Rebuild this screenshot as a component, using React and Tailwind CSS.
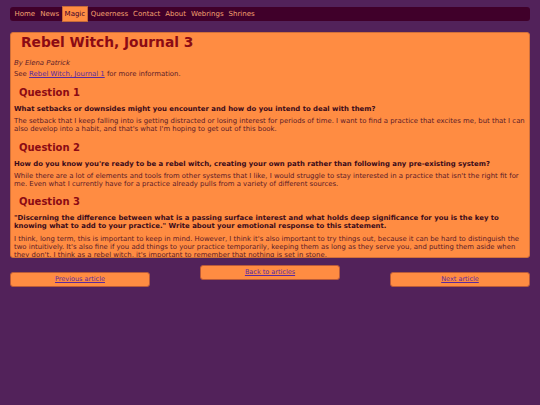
export default function App() {
  const nav = ["Home", "News", "Magic", "Queerness", "Contact", "About", "Webrings", "Shrines"];
  return (
    <div className="min-h-screen bg-[#52225a] px-[10px] pt-[7px] pb-4 font-['DejaVu_Sans',sans-serif]">
      <nav className="flex h-[14px] items-center rounded-[3px] bg-[#40002a] px-[2px] text-[7px]">
        {nav.map((n) =>
          n === "Magic" ? (
            <span
              key={n}
              className="flex h-[16px] items-center border border-[#c46a3a] bg-[#ff8c42] px-[2px] text-[#40002a]"
            >
              {n}
            </span>
          ) : (
            <span key={n} className="px-[2.5px] text-[#f4a070]">
              {n}
            </span>
          )
        )}
      </nav>

      <main className="mt-[11px] h-[226px] overflow-hidden rounded-[3px] border border-[#d0703a] bg-[#ff8c42] px-[3px] text-[6.9px] leading-[8px] text-[#5a1a28]">
        <h1 className="ml-[7px] text-[13.75px] font-bold leading-[18px] text-[#8b0a14]">
          Rebel Witch, Journal 3
        </h1>
        <p className="mt-[8px] italic">By Elena Patrick</p>
        <p className="mt-[3px]">
          See{" "}
          <a href="#" className="text-[#5a2aa0] underline">
            Rebel Witch, Journal 1
          </a>{" "}
          for more information.
        </p>

        <h2 className="ml-[5px] mt-[8px] text-[10px] font-bold leading-[14px] text-[#8b0a14]">Question 1</h2>
        <p className="mt-[5px] font-bold text-[#3a0a1a]">
          What setbacks or downsides might you encounter and how do you intend to deal with them?
        </p>
        <p className="mt-[4px]">
          The setback that I keep falling into is getting distracted or losing interest for periods of time. I want to
          find a practice that excites me, but that I can also develop into a habit, and that's what I'm hoping to get
          out of this book.
        </p>

        <h2 className="ml-[5px] mt-[8px] text-[10px] font-bold leading-[14px] text-[#8b0a14]">Question 2</h2>
        <p className="mt-[5px] font-bold text-[#3a0a1a]">
          How do you know you're ready to be a rebel witch, creating your own path rather than following any
          pre-existing system?
        </p>
        <p className="mt-[4px]">
          While there are a lot of elements and tools from other systems that I like, I would struggle to stay
          interested in a practice that isn't the right fit for me. Even what I currently have for a practice already
          pulls from a variety of different sources.
        </p>

        <h2 className="ml-[5px] mt-[7px] text-[10px] font-bold leading-[14px] text-[#8b0a14]">Question 3</h2>
        <p className="mt-[5px] font-bold text-[#3a0a1a]">
          "Discerning the difference between what is a passing surface interest and what holds deep significance for
          you is the key to knowing what to add to your practice." Write about your emotional response to this
          statement.
        </p>
        <p className="mt-[5px]">
          I think, long term, this is important to keep in mind. However, I think it's also important to try things
          out, because it can be hard to distinguish the two intuitively. It's also fine if you add things to your
          practice temporarily, keeping them as long as they serve you, and putting them aside when they don't. I think
          as a rebel witch, it's important to remember that nothing is set in stone.
        </p>
      </main>

      <div className="mt-[7px] flex items-start justify-between text-[6.5px]">
        <a
          href="#"
          className="mt-[7px] flex h-[15px] w-[140px] items-center justify-center rounded-[3px] border border-[#b85a3a] bg-[#ff8c42] text-[#5a2aa0] underline"
        >
          Previous article
        </a>
        <a
          href="#"
          className="flex h-[15px] w-[140px] items-center justify-center rounded-[3px] border border-[#b85a3a] bg-[#ff8c42] text-[#5a2aa0] underline"
        >
          Back to articles
        </a>
        <a
          href="#"
          className="mt-[7px] flex h-[15px] w-[140px] items-center justify-center rounded-[3px] border border-[#b85a3a] bg-[#ff8c42] text-[#5a2aa0] underline"
        >
          Next article
        </a>
      </div>
    </div>
  );
}
